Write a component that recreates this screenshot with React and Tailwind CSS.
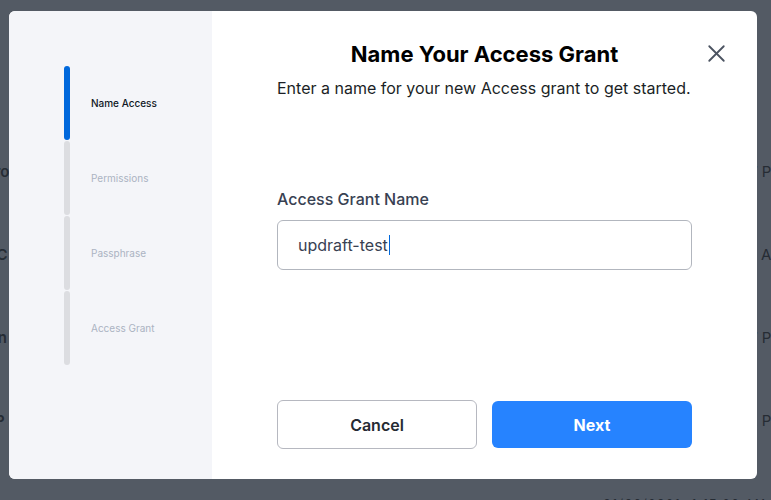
import { X } from 'lucide-react';

const steps = [
  { name: 'Name Access', active: true },
  { name: 'Permissions', active: false },
  { name: 'Passphrase', active: false },
  { name: 'Access Grant', active: false },
];

const backgroundRows = [
  { left: 'Pro', right: '07 PM' },
  { left: 'OC', right: 'AM' },
  { left: 'Fin', right: '7 PM' },
  { left: 'TP', right: '2 PM' },
];

export default function App() {
  return (
    <div
      className="relative h-[500px] w-full overflow-hidden bg-[#535a64]"
      style={{ fontFamily: 'Inter, "Noto Sans", sans-serif' }}
    >
      {/* page behind the overlay */}
      <div className="flex flex-col pt-[161px] text-[15px] font-semibold text-[#262c34]">
        {backgroundRows.map((row) => (
          <div key={row.left} className="flex h-[83px] justify-between">
            <span className="-ml-[15px] leading-[22px]">{row.left}</span>
            <span className="-mr-[14px] leading-[22px] font-normal">{row.right}</span>
          </div>
        ))}
        <div className="flex justify-end pr-[4px] pt-[2px] text-[11px] font-normal tracking-[2px] text-[#262c34]">
          01/06/2021, 1:17:26 AM
        </div>
      </div>

      {/* modal */}
      <div className="absolute left-[9px] top-[11px] flex h-[468px] w-[748px] overflow-hidden rounded-md bg-white">
        <aside className="w-[203px] shrink-0 bg-[#f4f5f9] pl-[55px] pt-[55px]">
          <ul className="flex flex-col gap-[1px]">
            {steps.map((step) => (
              <li key={step.name} className="flex h-[74px] items-center">
                <span
                  className={
                    step.active
                      ? 'h-full w-[6px] rounded-full bg-[#0068dc]'
                      : 'h-full w-[6px] rounded-full bg-[#dcdde1]'
                  }
                />
                <span
                  className={
                    step.active
                      ? 'ml-[21px] text-[10px] font-medium text-[#0f1724]'
                      : 'ml-[21px] text-[10px] text-[#abb3c2]'
                  }
                >
                  {step.name}
                </span>
              </li>
            ))}
          </ul>
        </aside>

        <section className="relative flex flex-1 flex-col px-[65px] pb-[30px] pt-[29px]">
          <button className="absolute right-[26px] top-[28px] text-[#4b5361]">
            <X size={29} strokeWidth={1.5} />
          </button>
          <h2 className="text-center text-[22px] font-bold leading-[28px] text-black">
            Name Your Access Grant
          </h2>
          <p className="mt-[8px] text-[16px] leading-[24px] text-[#1b1f26]">
            Enter a name for your new Access grant to get started.
          </p>

          <label className="mt-[87px] text-[16px] font-medium leading-[24px] text-[#384152]">
            Access Grant Name
          </label>
          <div className="mt-[9px] flex h-[50px] items-center rounded-md border border-[#b2b6be] px-[20px] text-[16px] text-[#384152]">
            updraft-test
            <span className="ml-[1px] h-[20px] w-[1px] bg-[#0068dc]" />
          </div>

          <div className="mt-auto grid grid-cols-2 gap-[15px]">
            <button className="h-[49px] rounded-md border border-[#b6b8c0] bg-white text-[16px] font-semibold text-[#262b33]">
              Cancel
            </button>
            <button className="h-[47px] self-center rounded-md bg-[#2683ff] text-[16px] font-bold text-white">
              Next
            </button>
          </div>
        </section>
      </div>
    </div>
  );
}
